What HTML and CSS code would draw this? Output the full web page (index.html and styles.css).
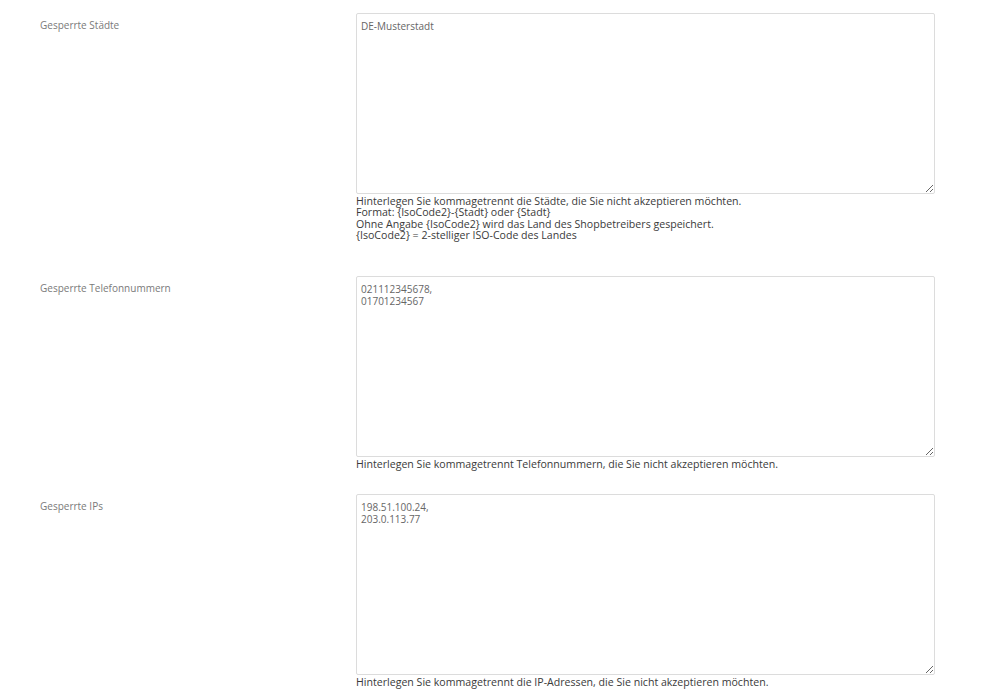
FILE: index.html
```html
<!DOCTYPE html>
<html lang="de">
<head>
<meta charset="utf-8">
<title>Sperrlisten</title>
<link rel="stylesheet" href="styles.css">
</head>
<body>
<form class="settings">
  <div class="row">
    <label class="label" for="cities">Gesperrte Städte</label>
    <div class="control">
      <textarea id="cities" class="field">DE-Musterstadt</textarea>
      <div class="help help-multi">Hinterlegen Sie kommagetrennt die Städte, die Sie nicht akzeptieren möchten.<br>Format: {IsoCode2}-{Stadt} oder {Stadt}<br>Ohne Angabe {IsoCode2} wird das Land des Shopbetreibers gespeichert.<br>{IsoCode2} = 2-stelliger ISO-Code des Landes</div>
    </div>
  </div>
  <div class="row">
    <label class="label" for="phones">Gesperrte Telefonnummern</label>
    <div class="control">
      <textarea id="phones" class="field">021112345678,
01701234567</textarea>
      <div class="help">Hinterlegen Sie kommagetrennt Telefonnummern, die Sie nicht akzeptieren möchten.</div>
    </div>
  </div>
  <div class="row">
    <label class="label" for="ips">Gesperrte IPs</label>
    <div class="control">
      <textarea id="ips" class="field">198.51.100.24,
203.0.113.77</textarea>
      <div class="help">Hinterlegen Sie kommagetrennt die IP-Adressen, die Sie nicht akzeptieren möchten.</div>
    </div>
  </div>
</form>
</body>
</html>
```
FILE: styles.css
```css
html, body {
  margin: 0;
  padding: 0;
  background: #ffffff;
}
body {
  font-family: "Open Sans", "Noto Sans", sans-serif;
  font-size: 10px;
  line-height: 11px;
  color: #444;
}
.settings {
  display: flex;
  flex-direction: column;
  padding: 13px 64px 0 40px;
}
.row {
  display: grid;
  grid-template-columns: 316px 579px;
  padding-bottom: 24px;
}
.label {
  color: #7a7a7a;
  font-size: 10px;
  padding-top: 7px;
}
.control {
  display: flex;
  flex-direction: column;
}
.field {
  box-sizing: border-box;
  width: 579px;
  height: 181px;
  margin: 0;
  padding: 6px 4px;
  border: 1px solid #dcdcdc;
  border-radius: 2px;
  font-family: "Open Sans", "Noto Sans", sans-serif;
  font-size: 10px;
  line-height: 12px;
  color: #666;
  background: #fff;
  resize: vertical;
}
.help {
  margin-top: 2px;
  font-size: 10.6px;
  line-height: 11.3px;
  color: #3a3a3a;
}
.help-multi {
  margin-bottom: 11px;
}
```
